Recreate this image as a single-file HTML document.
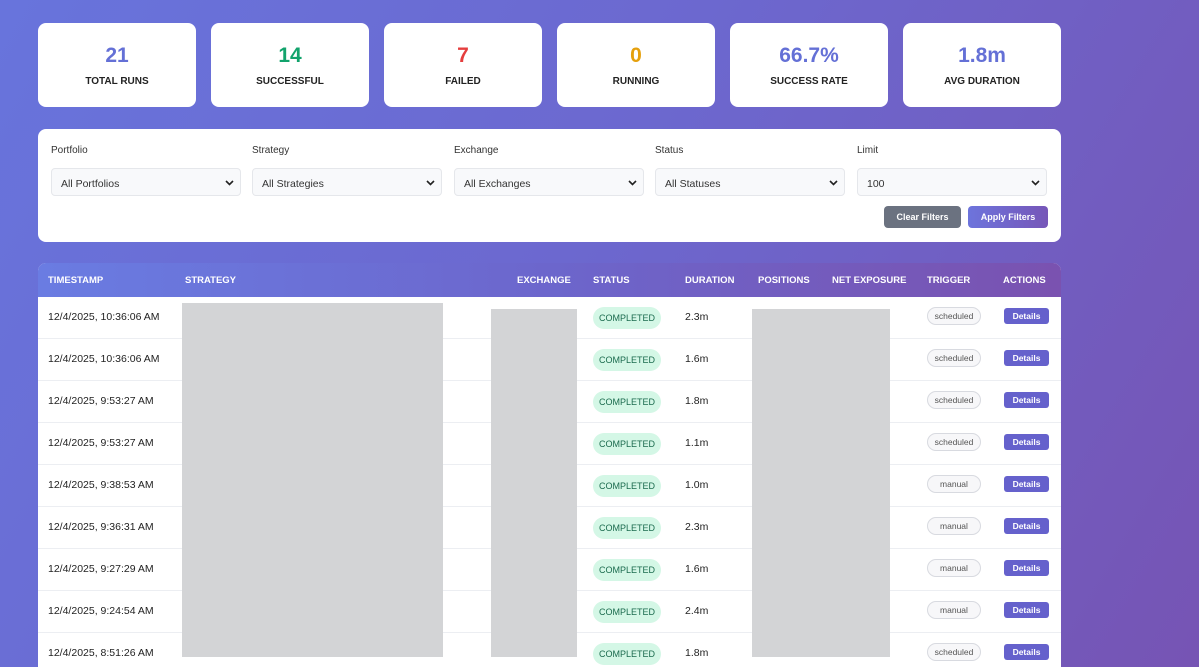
<!DOCTYPE html><html style="background:#6c66cc"><head><style>
*{box-sizing:border-box;margin:0;padding:0}
html,body{width:1199px;height:667px;overflow:hidden}
body{font-family:"Liberation Sans",sans-serif;background:linear-gradient(120deg,#6874dc 0%,#6c68cf 45%,#7654b4 100%);position:relative}
.card{position:absolute;top:23px;width:158px;height:84px;background:#fff;border-radius:8px;text-align:center}
.card .n{font-size:21px;font-weight:bold;margin-top:21px;height:24px}
.card .l{font-size:10px;font-weight:bold;color:#222;margin-top:8px}
.panel{position:absolute;left:38px;top:129px;width:1023px;height:113px;background:#fff;border-radius:8px}
.lab{position:absolute;top:16px;font-size:10px;color:#333}
.sel{position:absolute;top:39px;width:190px;height:28px;border:1px solid #e5e7eb;border-radius:4px;background:#f8f9fb;font-size:10.5px;color:#333;padding:9px 9px}
.sel svg{position:absolute;right:6px;top:11px}
.btn{position:absolute;top:77px;height:22px;border-radius:4px;color:#fff;font-size:9px;font-weight:bold;text-align:center;line-height:22px}
.table{position:absolute;left:38px;top:263px;width:1023px;height:420px;background:#fff;border-radius:8px 8px 0 0;overflow:hidden}
.hd{height:34px;background:linear-gradient(90deg,#6a7ce2,#6c66cc 50%,#7a52b0);position:relative}
.hd span{position:absolute;top:12px;color:#fff;font-size:9.5px;font-weight:bold}
.row{position:absolute;left:0;width:1023px;height:42px;border-bottom:1px solid #eceef2;font-size:10.5px;color:#222}
.row span{position:absolute}
.st{left:555px;top:10px;width:68px;height:22px;border-radius:11px;background:#d4f7e6;color:#1b6b4e;font-size:9px;text-align:center;line-height:22px}
.tr{left:889px;top:10px;width:54px;height:18px;border:1px solid #d8dae0;border-radius:9px;background:#f7f7f9;color:#555;font-size:8.5px;text-align:center;line-height:16px}
.dt{left:966px;top:11px;width:45px;height:16px;border-radius:3px;background:#6561cc;color:#fff;font-size:8.5px;font-weight:bold;text-align:center;line-height:16px}
.gray{position:absolute;background:#d3d4d6}
</style></head><body>
<div class="card" style="left:38px"><div class="n" style="color:#6470d6">21</div><div class="l">TOTAL RUNS</div></div>
<div class="card" style="left:211px"><div class="n" style="color:#12a36c">14</div><div class="l">SUCCESSFUL</div></div>
<div class="card" style="left:384px"><div class="n" style="color:#e53e3e">7</div><div class="l">FAILED</div></div>
<div class="card" style="left:557px"><div class="n" style="color:#e5a00d">0</div><div class="l">RUNNING</div></div>
<div class="card" style="left:730px"><div class="n" style="color:#6470d6">66.7%</div><div class="l">SUCCESS RATE</div></div>
<div class="card" style="left:903px"><div class="n" style="color:#6470d6">1.8m</div><div class="l">AVG DURATION</div></div>
<div class="panel">
<div class="lab" style="left:13px">Portfolio</div><div class="sel" style="left:13px">All Portfolios<svg width="9" height="6"><path d="M1 1l3.5 3.5L8 1" stroke="#222" stroke-width="1.6" fill="none"/></svg></div>
<div class="lab" style="left:214px">Strategy</div><div class="sel" style="left:214px">All Strategies<svg width="9" height="6"><path d="M1 1l3.5 3.5L8 1" stroke="#222" stroke-width="1.6" fill="none"/></svg></div>
<div class="lab" style="left:416px">Exchange</div><div class="sel" style="left:416px">All Exchanges<svg width="9" height="6"><path d="M1 1l3.5 3.5L8 1" stroke="#222" stroke-width="1.6" fill="none"/></svg></div>
<div class="lab" style="left:617px">Status</div><div class="sel" style="left:617px">All Statuses<svg width="9" height="6"><path d="M1 1l3.5 3.5L8 1" stroke="#222" stroke-width="1.6" fill="none"/></svg></div>
<div class="lab" style="left:819px">Limit</div><div class="sel" style="left:819px">100<svg width="9" height="6"><path d="M1 1l3.5 3.5L8 1" stroke="#222" stroke-width="1.6" fill="none"/></svg></div>
<div class="btn" style="left:846px;width:77px;background:#6b7280">Clear Filters</div>
<div class="btn" style="left:930px;width:80px;background:linear-gradient(90deg,#6d74dc,#7656b8)">Apply Filters</div>
</div>
<div class="table">
<div class="hd"><span style="left:10px">TIMESTAMP</span><span style="left:147px">STRATEGY</span><span style="left:479px">EXCHANGE</span><span style="left:555px">STATUS</span><span style="left:647px">DURATION</span><span style="left:720px">POSITIONS</span><span style="left:794px">NET EXPOSURE</span><span style="left:889px">TRIGGER</span><span style="left:965px">ACTIONS</span></div>
<div class="row" style="top:34px"><span style="left:10px;top:14px">12/4/2025, 10:36:06 AM</span><span class="st">COMPLETED</span><span style="left:647px;top:14px">2.3m</span><span class="tr">scheduled</span><span class="dt">Details</span></div>
<div class="row" style="top:76px"><span style="left:10px;top:14px">12/4/2025, 10:36:06 AM</span><span class="st">COMPLETED</span><span style="left:647px;top:14px">1.6m</span><span class="tr">scheduled</span><span class="dt">Details</span></div>
<div class="row" style="top:118px"><span style="left:10px;top:14px">12/4/2025, 9:53:27 AM</span><span class="st">COMPLETED</span><span style="left:647px;top:14px">1.8m</span><span class="tr">scheduled</span><span class="dt">Details</span></div>
<div class="row" style="top:160px"><span style="left:10px;top:14px">12/4/2025, 9:53:27 AM</span><span class="st">COMPLETED</span><span style="left:647px;top:14px">1.1m</span><span class="tr">scheduled</span><span class="dt">Details</span></div>
<div class="row" style="top:202px"><span style="left:10px;top:14px">12/4/2025, 9:38:53 AM</span><span class="st">COMPLETED</span><span style="left:647px;top:14px">1.0m</span><span class="tr">manual</span><span class="dt">Details</span></div>
<div class="row" style="top:244px"><span style="left:10px;top:14px">12/4/2025, 9:36:31 AM</span><span class="st">COMPLETED</span><span style="left:647px;top:14px">2.3m</span><span class="tr">manual</span><span class="dt">Details</span></div>
<div class="row" style="top:286px"><span style="left:10px;top:14px">12/4/2025, 9:27:29 AM</span><span class="st">COMPLETED</span><span style="left:647px;top:14px">1.6m</span><span class="tr">manual</span><span class="dt">Details</span></div>
<div class="row" style="top:328px"><span style="left:10px;top:14px">12/4/2025, 9:24:54 AM</span><span class="st">COMPLETED</span><span style="left:647px;top:14px">2.4m</span><span class="tr">manual</span><span class="dt">Details</span></div>
<div class="row" style="top:370px"><span style="left:10px;top:14px">12/4/2025, 8:51:26 AM</span><span class="st">COMPLETED</span><span style="left:647px;top:14px">1.8m</span><span class="tr">scheduled</span><span class="dt">Details</span></div>
<div class="gray" style="left:144px;top:40px;width:261px;height:354px"></div>
<div class="gray" style="left:453px;top:46px;width:86px;height:348px"></div>
<div class="gray" style="left:714px;top:46px;width:138px;height:348px"></div>
</div>
</body></html>
